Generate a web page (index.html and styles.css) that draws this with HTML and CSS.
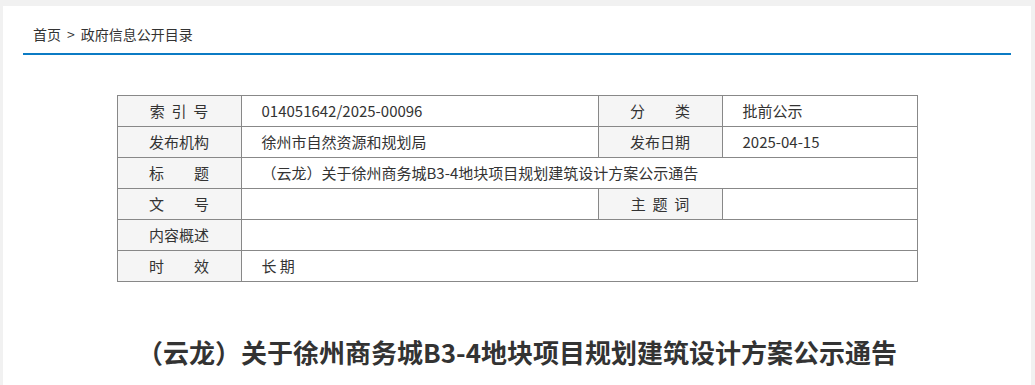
FILE: index.html
```html
<!DOCTYPE html>
<html lang="zh-CN">
<head>
<meta charset="utf-8">
<title>政府信息公开目录</title>
<link rel="stylesheet" href="styles.css">
</head>
<body>
<div class="panel">
  <div class="crumb-wrap">
    <div class="crumb"><a href="#">首页</a><span class="sep">&gt;</span><a href="#">政府信息公开目录</a></div>
  </div>
  <table class="info">
    <colgroup>
      <col class="c-label"><col class="c-val"><col class="c-label"><col class="c-val2">
    </colgroup>
    <tr>
      <th>索&nbsp;&nbsp;引&nbsp;&nbsp;号</th>
      <td>014051642/2025-00096</td>
      <th>分　　类</th>
      <td>批前公示</td>
    </tr>
    <tr>
      <th>发布机构</th>
      <td>徐州市自然资源和规划局</td>
      <th>发布日期</th>
      <td>2025-04-15</td>
    </tr>
    <tr>
      <th>标　　题</th>
      <td colspan="3">（云龙）关于徐州商务城B3-4地块项目规划建筑设计方案公示通告</td>
    </tr>
    <tr>
      <th>文　　号</th>
      <td></td>
      <th>主&nbsp;&nbsp;题&nbsp;&nbsp;词</th>
      <td></td>
    </tr>
    <tr>
      <th>内容概述</th>
      <td colspan="3"></td>
    </tr>
    <tr>
      <th>时　　效</th>
      <td colspan="3">长&nbsp;期</td>
    </tr>
  </table>
  <h1 class="headline">（云龙）关于徐州商务城B3-4地块项目规划建筑设计方案公示通告</h1>
</div>
</body>
</html>
```

FILE: styles.css
```css
html, body {
  margin: 0;
  padding: 0;
  background: #f1f1f1;
}
body {
  font-family: "Noto Sans CJK SC", "Microsoft YaHei", sans-serif;
  color: #333;
}
.panel {
  background: #fff;
  margin: 6px 4px 0 3px;
  min-height: 379px;
  padding: 0 20px;
  overflow: hidden;
}
.crumb-wrap {
  border-bottom: 2px solid #0b7bc4;
  padding: 18px 0 9px 10px;
}
.crumb {
  font-size: 14px;
  line-height: 20px;
  color: #333;
}
.crumb a {
  color: #333;
  text-decoration: none;
}
.crumb .sep {
  margin: 0 6px;
}
.info {
  width: 800px;
  margin: 40px auto 0;
  border-collapse: collapse;
  table-layout: fixed;
  font-size: 15px;
}
.c-label { width: 124px; }
.c-val { width: 357px; }
.c-val2 { width: 195px; }
.info th, .info td {
  border: 1px solid #888;
  height: 31px;
  padding: 0;
  line-height: 20px;
  box-sizing: border-box;
}
.info th {
  background: #f5f5f5;
  font-weight: normal;
  text-align: center;
  color: #333;
}
.info td {
  text-align: left;
  padding-left: 20px;
  color: #333;
}
.headline {
  margin: 52px 0 0;
  text-align: center;
  font-size: 26px;
  line-height: 36px;
  font-weight: bold;
  color: #333;
}
```
